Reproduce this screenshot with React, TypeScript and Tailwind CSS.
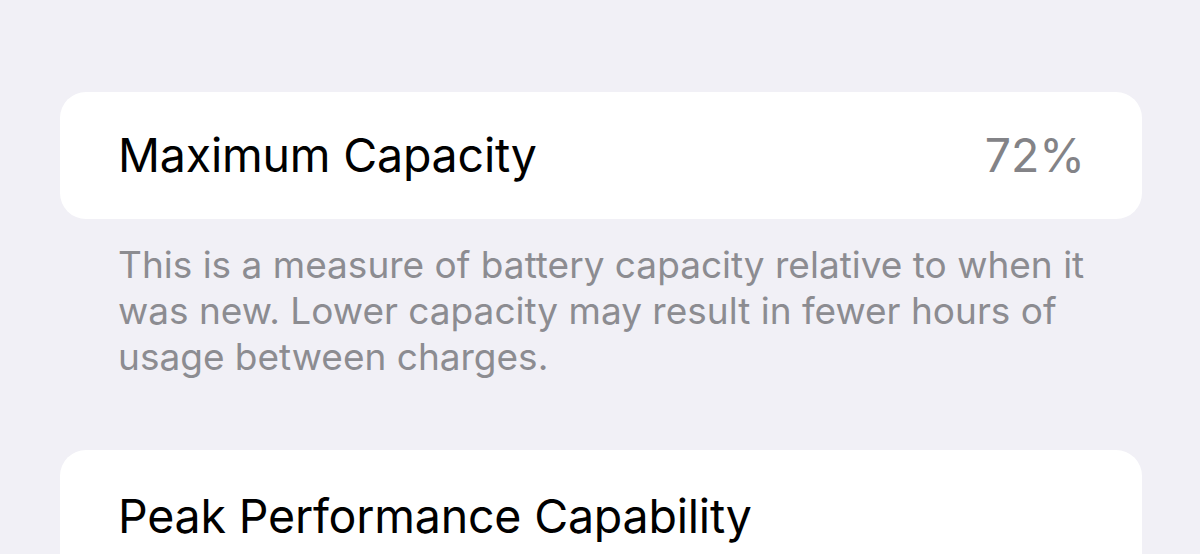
export default function App() {
  return (
    <div
      className="w-[1200px] h-[554px] overflow-hidden bg-[#f1f0f6] pl-[60px] pr-[58px] pt-[92px]"
      style={{ fontFamily: 'Inter, "Liberation Sans", sans-serif' }}
    >
      {/* capacity row */}
      <div className="h-[127px] rounded-[26px] bg-white flex items-center justify-between pl-[58px] pr-[57px]">
        <span className="text-[46.5px] text-black tracking-[-0.2px]">Maximum Capacity</span>
        <span className="text-[46.5px] text-[#838387]">72%</span>
      </div>
      <p className="mt-[23px] pl-[58px] pr-[40px] text-[37px] leading-[46px] text-[#8c8c91]">
        This is a measure of battery capacity relative to when it was new. Lower capacity may result in fewer hours of usage between charges.
      </p>

      {/* performance row */}
      <div className="mt-[70px] h-[140px] rounded-t-[26px] bg-white pl-[58px] pt-[32px]">
        <span className="text-[46.5px] text-black tracking-[-0.2px]">Peak Performance Capability</span>
      </div>
    </div>
  )
}
